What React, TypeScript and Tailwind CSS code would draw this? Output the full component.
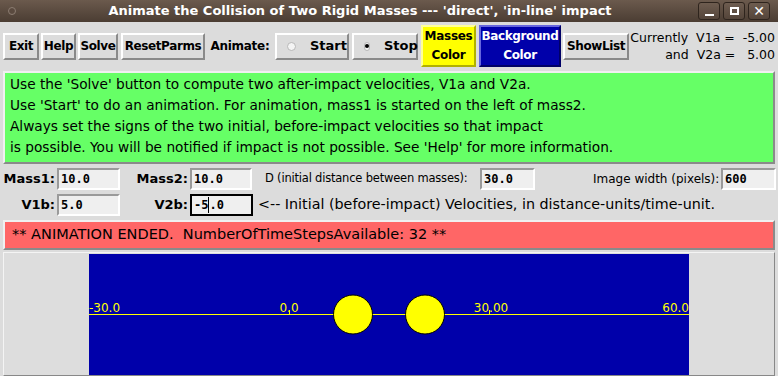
import { ReactNode } from 'react';

const ui = "font-['DejaVu_Sans',sans-serif]";
const mono = "font-['DejaVu_Sans_Mono',monospace]";

function TkButton({ w, children, className = '' }: { w: string; children: ReactNode; className?: string }) {
  return (
    <div
      className={`${w} h-[27px] shrink-0 flex items-center justify-center bg-[#dcdcdc] border-2 border-t-white border-l-white border-b-[#8a8a8a] border-r-[#8a8a8a] text-[12px] font-bold tracking-[-0.4px] text-black whitespace-nowrap ${className}`}
    >
      {children}
    </div>
  );
}

function Radio({ w, label, on, className = '' }: { w: string; label: string; on?: boolean; className?: string }) {
  return (
    <div
      className={`${w} h-[27px] shrink-0 flex items-center gap-[14px] pl-[10px] bg-[#dcdcdc] border-2 border-t-white border-l-white border-b-[#8a8a8a] border-r-[#8a8a8a] text-[13px] font-bold ${className}`}
    >
      <span className="w-[9px] h-[9px] rounded-full bg-[#f4f4f4] border border-[#b8b8b8] flex items-center justify-center">
        {on && <span className="w-[4px] h-[4px] rounded-full bg-black" />}
      </span>
      {label}
    </div>
  );
}

function Field({ w, value, focus, className = '' }: { w: string; value: string; focus?: boolean; className?: string }) {
  return (
    <div
      className={`${w} h-[22px] shrink-0 flex items-center pl-[2px] bg-[#efefef] ${mono} text-[12px] font-bold text-black ${
        focus ? 'border-2 border-black' : 'border-2 border-t-[#9a9a9a] border-l-[#9a9a9a] border-b-white border-r-white'
      } ${className}`}
    >
      {focus ? (
        <>
          -5<span className="w-px h-[16px] bg-black" />.0
        </>
      ) : (
        value
      )}
    </div>
  );
}

function Label({ w, children }: { w: string; children: ReactNode }) {
  return <div className={`${w} shrink-0 text-right pr-[2px] text-[13px] font-bold`}>{children}</div>;
}

export default function App() {
  return (
    <div className={`w-[778px] h-[376px] overflow-hidden bg-[#dcdcdc] text-black ${ui} flex flex-col`}>
      {/* title bar */}
      <div className="h-[22px] shrink-0 flex items-center bg-gradient-to-b from-[#6b5a4d] to-[#4b3d33] px-[8px]">
        <span className="w-[8px] h-[8px] rounded-full border border-[#8c7d72] bg-[#5a4a3f]" />
        <div className="flex-1 text-center text-white font-bold text-[13px] pl-[6px]">
          Animate the Collision of Two Rigid Masses --- 'direct', 'in-line' impact
        </div>
        <div className="flex gap-[3px]">
          {['min', 'max', 'close'].map((k) => (
            <div
              key={k}
              className="w-[22px] h-[18px] rounded-[3px] border border-[#2e241d] bg-gradient-to-b from-[#6e5d50] to-[#54453a] flex items-center justify-center"
            >
              {k === 'min' && <span className="w-[9px] h-[2px] bg-white mt-[7px]" />}
              {k === 'max' && <span className="w-[9px] h-[8px] border-2 border-white" />}
              {k === 'close' && <span className="text-white font-bold text-[14px] leading-none">✕</span>}
            </div>
          ))}
        </div>
      </div>

      {/* toolbar */}
      <div className="h-[48px] shrink-0 flex items-center pl-[3px]">
        <TkButton w="w-[36px]">Exit</TkButton>
        <TkButton w="w-[35px]" className="ml-[2px]">Help</TkButton>
        <TkButton w="w-[40px]" className="ml-[2px]">Solve</TkButton>
        <TkButton w="w-[84px]" className="ml-[3px]">ResetParms</TkButton>
        <div className="w-[70px] shrink-0 text-[12px] font-bold text-center tracking-[-0.3px]">Animate:</div>
        <Radio w="w-[74px]" label="Start" />
        <Radio w="w-[66px]" label="Stop" on className="ml-[3px]" />
        <div className="ml-[3px] w-[55px] h-[42px] shrink-0 flex flex-col items-center justify-center leading-[19px] bg-[#ffff00] border-2 border-t-[#ffff99] border-l-[#ffff99] border-b-[#b0b000] border-r-[#b0b000] text-[12px] font-bold tracking-[-0.3px]">
          <span>Masses</span>
          <span>Color</span>
        </div>
        <div className="ml-[3px] w-[82px] h-[42px] shrink-0 flex flex-col items-center justify-center leading-[19px] bg-[#0000aa] border-2 border-t-[#6666dd] border-l-[#6666dd] border-b-[#000066] border-r-[#000066] text-white text-[12px] font-bold tracking-[-0.4px]">
          <span>Background</span>
          <span>Color</span>
        </div>
        <TkButton w="w-[66px]" className="ml-[2px]">ShowList</TkButton>
        <div className="flex-1 text-right pr-[3px] text-[12.5px] leading-[17px] whitespace-pre">
          <div>{'Currently  V1a =  -5.00'}</div>
          <div>{'and  V2a =   5.00'}</div>
        </div>
      </div>

      {/* info box */}
      <div className="mx-[3px] mt-[1px] h-[93px] shrink-0 bg-[#66ff66] border-2 border-t-[#f0f0f0] border-l-[#f0f0f0] border-b-[#8a8a8a] border-r-[#8a8a8a] px-[5px] pt-[1px] text-[13.7px] leading-[21px] whitespace-nowrap">
        <div>Use the 'Solve' button to compute two after-impact velocities, V1a and V2a.</div>
        <div>Use 'Start' to do an animation. For animation, mass1 is started on the left of mass2.</div>
        <div>Always set the signs of the two initial, before-impact velocities so that impact</div>
        <div>is possible. You will be notified if impact is not possible. See 'Help' for more information.</div>
      </div>

      {/* row 1 */}
      <div className="mt-[4px] h-[22px] shrink-0 flex items-center">
        <Label w="w-[57px]">Mass1:</Label>
        <Field w="w-[63px]" value="10.0" />
        <Label w="w-[70px]">Mass2:</Label>
        <Field w="w-[62px]" value="10.0" />
        <div className="ml-[13px] w-[215px] shrink-0 text-[11.5px] tracking-[-0.2px] whitespace-nowrap">D (initial distance between masses):</div>
        <Field w="w-[55px]" value="30.0" />
        <div className="ml-[58px] w-[128px] shrink-0 text-[12px] whitespace-nowrap">Image width (pixels):</div>
        <Field w="w-[55px]" value="600" />
      </div>

      {/* row 2 */}
      <div className="mt-[3px] h-[23px] shrink-0 flex items-center">
        <Label w="w-[57px]">V1b:</Label>
        <Field w="w-[63px]" value="5.0" />
        <Label w="w-[70px]">V2b:</Label>
        <Field w="w-[63px]" value="-5.0" focus />
        <div className="ml-[5px] text-[14.3px] whitespace-nowrap">{'<-- Initial (before-impact) Velocities, in distance-units/time-unit.'}</div>
      </div>

      {/* status */}
      <div className="mx-[3px] mt-[4px] h-[30px] shrink-0 flex items-center bg-[#ff6666] border-2 border-t-[#f0f0f0] border-l-[#f0f0f0] border-b-[#8a8a8a] border-r-[#8a8a8a] pl-[7px] text-[14.5px] whitespace-pre">
        {'** ANIMATION ENDED.  NumberOfTimeStepsAvailable: 32 **'}
      </div>

      {/* canvas */}
      <div className="mx-[3px] mt-[2px] flex-1 flex justify-center bg-[#dddddd] border border-t-[#f4f4f4] border-l-[#f4f4f4] border-b-[#888888] border-r-[#888888]">
        <svg width="600" height="121" className="block mt-[1px]">
          <rect x="0" y="0" width="600" height="121" fill="#0000aa" />
          <line x1="0" y1="60.5" x2="600" y2="60.5" stroke="#ffff00" strokeWidth="1" />
          <line x1="200.5" y1="56" x2="200.5" y2="60" stroke="#ffff00" strokeWidth="1" />
          <line x1="400.5" y1="56" x2="400.5" y2="60" stroke="#ffff00" strokeWidth="1" />
          <g fill="#ffff00" fontFamily="DejaVu Sans, sans-serif" fontSize="12">
            <text x="0" y="58">-30.0</text>
            <text x="200" y="58" textAnchor="middle">0.0</text>
            <text x="402" y="58" textAnchor="middle">30.00</text>
            <text x="600" y="58" textAnchor="end">60.0</text>
          </g>
          <circle cx="264" cy="60.5" r="19.5" fill="#ffff00" stroke="#000" strokeWidth="1" />
          <circle cx="336" cy="60.5" r="19.5" fill="#ffff00" stroke="#000" strokeWidth="1" />
        </svg>
      </div>
    </div>
  );
}
